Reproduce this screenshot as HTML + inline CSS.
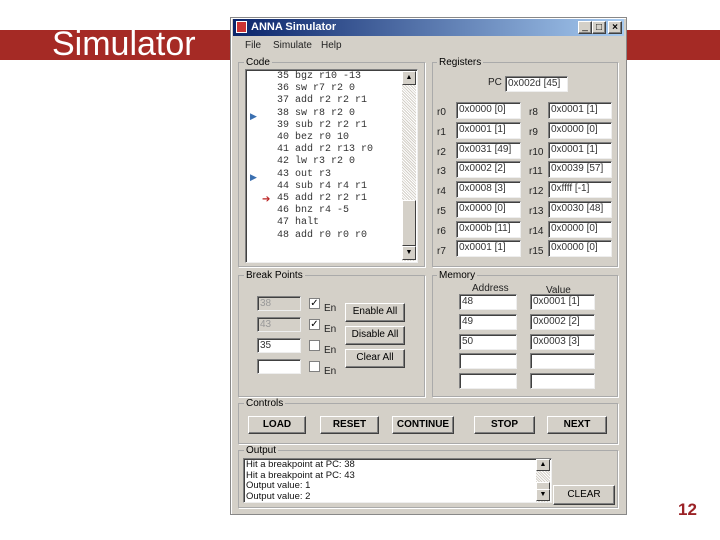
<!DOCTYPE html>
<html><head><meta charset="utf-8"><style>
*{margin:0;padding:0;box-sizing:border-box}
body{width:720px;height:540px;background:#fff;position:relative;overflow:hidden;font-family:"Liberation Sans",sans-serif}
.a{position:absolute}
.bar{left:0;top:30px;width:720px;height:30px;background:#a52a25}
.ttl{left:52px;top:25px;color:#fff;font-size:34px;line-height:38px}
.win{left:230px;top:17px;width:397px;height:498px;background:#d4d0c8;border:1px solid #888;box-shadow:inset 1px 1px #fff}
.tb{left:233px;top:19px;width:391px;height:17px;background:linear-gradient(90deg,#0a246a,#a6caf0);color:#fff;font-weight:bold;font-size:11px;line-height:17px;padding-left:18px}
.gb{border:1px solid #aaa;box-shadow:1px 1px #fff}
.lg{background:#d4d0c8;font-size:10px;padding:0 2px;color:#000;line-height:11px}
.tx{background:#fff;border:1px solid #808080;border-right-color:#eee;border-bottom-color:#eee;box-shadow:inset 1px 1px #404040;font-size:10px;line-height:14px;padding-left:2px;color:#333}
.btn{background:#d4d0c8;border:1px solid #fff;border-right-color:#404040;border-bottom-color:#404040;box-shadow:inset -1px -1px #808080;font-size:10px;text-align:center;line-height:16px}
.b{font-weight:bold}
.code{font-family:"Liberation Mono",monospace;font-size:10px;color:#333;line-height:12.2px}
.lb{font-size:10px;color:#222}
.cb{width:11px;height:11px;background:#fff;border:1px solid #808080;font-size:10px;line-height:9px;text-align:center}
.sb{background:#e8e6e0;background-image:repeating-linear-gradient(45deg,#d4d0c8 0 1px,#fff 1px 2px)}
.sbb{width:14px;height:14px;background:#d4d0c8;border:1px solid #fff;border-right-color:#404040;border-bottom-color:#404040;font-size:7px;text-align:center;line-height:12px}
</style></head><body>
<div class="a bar"></div>
<div class="a ttl">Simulator</div>
<div class="a win"></div>
<div class="a tb">ANNA Simulator</div>
<div class="a" style="left:236px;top:21px;width:11px;height:12px;background:#c33;border:1px solid #fff"></div>
<div class="a btn" style="left:578px;top:21px;width:14px;height:13px;line-height:10px">_</div>
<div class="a btn" style="left:592px;top:21px;width:14px;height:13px;line-height:12px">□</div>
<div class="a btn" style="left:608px;top:21px;width:14px;height:13px;line-height:12px;font-weight:bold">×</div>
<div class="a lb" style="left:245px;top:40px">File</div>
<div class="a lb" style="left:273px;top:40px">Simulate</div>
<div class="a lb" style="left:321px;top:40px">Help</div>

<div class="a gb" style="left:238px;top:62px;width:187px;height:205px"></div>
<div class="a lg" style="left:244px;top:57px">Code</div>
<div class="a tx" style="left:245px;top:69px;width:173px;height:194px"></div>
<div class="a sb" style="left:402px;top:71px;width:14px;height:190px"></div>
<div class="a" style="left:402px;top:200px;width:14px;height:46px;background:#d4d0c8;border:1px solid #fff;border-right-color:#404040;border-bottom-color:#404040"></div>
<div class="a sbb" style="left:402px;top:71px">▲</div>
<div class="a sbb" style="left:402px;top:246px">▼</div>
<div class="a code" style="left:277px;top:71px">35 bgz r10 -13<br>36 sw r7 r2 0<br>37 add r2 r2 r1<br>38 sw r8 r2 0<br>39 sub r2 r2 r1<br>40 bez r0 10<br>41 add r2 r13 r0<br>42 lw r3 r2 0<br>43 out r3<br>44 sub r4 r4 r1<br>45 add r2 r2 r1<br>46 bnz r4 -5<br>47 halt<br>48 add r0 r0 r0</div>
<div class="a" style="left:250px;top:111px;color:#3a6fb0;font-size:9px">▶</div>
<div class="a" style="left:250px;top:172px;color:#3a6fb0;font-size:9px">▶</div>
<div class="a" style="left:262px;top:194px;color:#b22;font-size:10px">➔</div>

<div class="a gb" style="left:432px;top:62px;width:186px;height:205px"></div>
<div class="a lg" style="left:437px;top:57px">Registers</div>
<div class="a lb" style="left:488px;top:77px">PC</div>
<div class="a tx" style="left:505px;top:76px;width:63px;height:16px">0x002d [45]</div>
<div class="a lb" style="left:437px;top:103px;line-height:19.8px">r0<br>r1<br>r2<br>r3<br>r4<br>r5<br>r6<br>r7</div>
<div class="a lb" style="left:529px;top:103px;line-height:19.8px">r8<br>r9<br>r10<br>r11<br>r12<br>r13<br>r14<br>r15</div>
<div class="a tx" style="left:456px;top:102px;width:65px;height:17px">0x0000 [0]</div>
<div class="a tx" style="left:456px;top:122px;width:65px;height:17px">0x0001 [1]</div>
<div class="a tx" style="left:456px;top:142px;width:65px;height:17px">0x0031 [49]</div>
<div class="a tx" style="left:456px;top:161px;width:65px;height:17px">0x0002 [2]</div>
<div class="a tx" style="left:456px;top:181px;width:65px;height:17px">0x0008 [3]</div>
<div class="a tx" style="left:456px;top:201px;width:65px;height:17px">0x0000 [0]</div>
<div class="a tx" style="left:456px;top:221px;width:65px;height:17px">0x000b [11]</div>
<div class="a tx" style="left:456px;top:240px;width:65px;height:17px">0x0001 [1]</div>
<div class="a tx" style="left:548px;top:102px;width:64px;height:17px">0x0001 [1]</div>
<div class="a tx" style="left:548px;top:122px;width:64px;height:17px">0x0000 [0]</div>
<div class="a tx" style="left:548px;top:142px;width:64px;height:17px">0x0001 [1]</div>
<div class="a tx" style="left:548px;top:161px;width:64px;height:17px">0x0039 [57]</div>
<div class="a tx" style="left:548px;top:181px;width:64px;height:17px">0xffff [-1]</div>
<div class="a tx" style="left:548px;top:201px;width:64px;height:17px">0x0030 [48]</div>
<div class="a tx" style="left:548px;top:221px;width:64px;height:17px">0x0000 [0]</div>
<div class="a tx" style="left:548px;top:240px;width:64px;height:17px">0x0000 [0]</div>

<div class="a gb" style="left:238px;top:275px;width:187px;height:122px"></div>
<div class="a lg" style="left:244px;top:270px">Break Points</div>
<div class="a tx" style="left:257px;top:296px;width:44px;height:15px;background:#d4d0c8;color:#999">38</div>
<div class="a tx" style="left:257px;top:317px;width:44px;height:15px;background:#d4d0c8;color:#999">43</div>
<div class="a tx" style="left:257px;top:338px;width:44px;height:15px">35</div>
<div class="a tx" style="left:257px;top:359px;width:44px;height:15px"></div>
<div class="a cb" style="left:309px;top:298px">✓</div>
<div class="a cb" style="left:309px;top:319px">✓</div>
<div class="a cb" style="left:309px;top:340px"></div>
<div class="a cb" style="left:309px;top:361px"></div>
<div class="a lb" style="left:324px;top:298px;line-height:21px">En<br>En<br>En<br>En</div>
<div class="a btn" style="left:345px;top:303px;width:60px;height:19px">Enable All</div>
<div class="a btn" style="left:345px;top:326px;width:60px;height:19px">Disable All</div>
<div class="a btn" style="left:345px;top:349px;width:60px;height:19px">Clear All</div>

<div class="a gb" style="left:432px;top:275px;width:186px;height:122px"></div>
<div class="a lg" style="left:437px;top:270px">Memory</div>
<div class="a lb" style="left:472px;top:283px">Address</div>
<div class="a lb" style="left:546px;top:285px">Value</div>
<div class="a tx" style="left:459px;top:294px;width:58px;height:16px">48</div>
<div class="a tx" style="left:459px;top:314px;width:58px;height:16px">49</div>
<div class="a tx" style="left:459px;top:334px;width:58px;height:16px">50</div>
<div class="a tx" style="left:459px;top:353px;width:58px;height:16px"></div>
<div class="a tx" style="left:459px;top:373px;width:58px;height:16px"></div>
<div class="a tx" style="left:530px;top:294px;width:65px;height:16px">0x0001 [1]</div>
<div class="a tx" style="left:530px;top:314px;width:65px;height:16px">0x0002 [2]</div>
<div class="a tx" style="left:530px;top:334px;width:65px;height:16px">0x0003 [3]</div>
<div class="a tx" style="left:530px;top:353px;width:65px;height:16px"></div>
<div class="a tx" style="left:530px;top:373px;width:65px;height:16px"></div>

<div class="a gb" style="left:238px;top:403px;width:380px;height:41px"></div>
<div class="a lg" style="left:244px;top:398px">Controls</div>
<div class="a btn b" style="left:248px;top:416px;width:58px;height:18px">LOAD</div>
<div class="a btn b" style="left:320px;top:416px;width:59px;height:18px">RESET</div>
<div class="a btn b" style="left:392px;top:416px;width:62px;height:18px">CONTINUE</div>
<div class="a btn b" style="left:474px;top:416px;width:61px;height:18px">STOP</div>
<div class="a btn b" style="left:547px;top:416px;width:60px;height:18px">NEXT</div>

<div class="a gb" style="left:238px;top:450px;width:380px;height:58px"></div>
<div class="a lg" style="left:244px;top:445px">Output</div>
<div class="a tx" style="left:243px;top:458px;width:309px;height:45px;font-size:9.5px;line-height:10.5px;color:#111;padding-top:1px">Hit a breakpoint at PC: 38<br>Hit a breakpoint at PC: 43<br>Output value: 1<br>Output value: 2</div>
<div class="a sb" style="left:536px;top:459px;width:14px;height:43px"></div>
<div class="a sbb" style="left:536px;top:459px;height:12px;line-height:10px">▲</div>
<div class="a sbb" style="left:536px;top:482px;height:8px"></div>
<div class="a sbb" style="left:536px;top:489px;height:12px;line-height:10px">▼</div>
<div class="a btn" style="left:553px;top:485px;width:62px;height:20px;line-height:18px">CLEAR</div>

<div class="a" style="left:678px;top:500px;color:#9b2226;font-weight:bold;font-size:17px">12</div>
</body></html>
